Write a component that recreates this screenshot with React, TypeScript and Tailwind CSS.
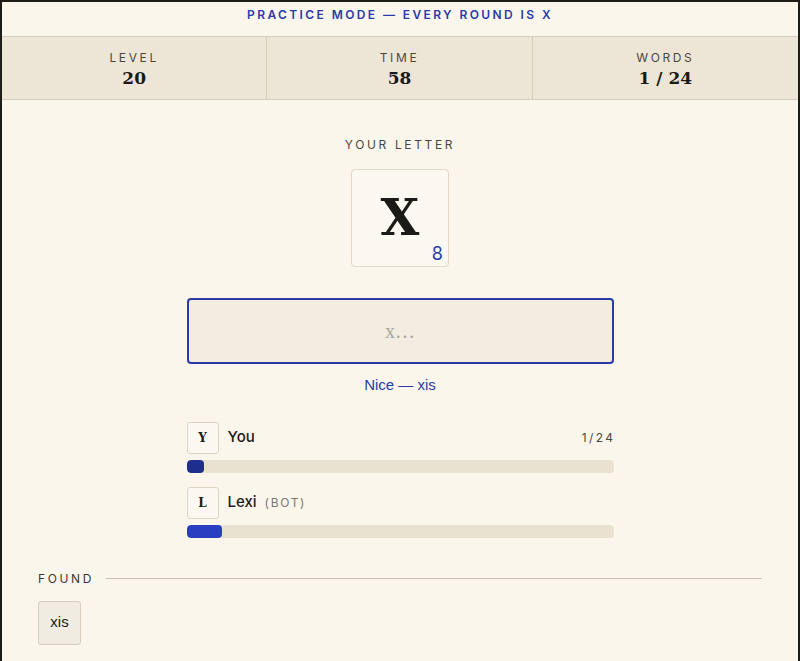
import React from 'react'

const sans = { fontFamily: 'Inter, "Liberation Sans", sans-serif' }
const slab = "[font-family:'DejaVu_Serif',serif]"

function Stat({ label, value, last }: { label: string; value: string; last?: boolean }) {
	return (
		<div className={`flex flex-col items-center justify-center h-full pt-[3px] ${last ? '' : 'border-r border-[#d6ccb8]'}`}>
			<span className="text-[12px] tracking-[0.22em] text-[#4a463e] leading-none">{label}</span>
			<span className={`mt-[6px] text-[17px] font-bold text-[#1c1a16] leading-none ${slab}`}>{value}</span>
		</div>
	)
}

function Player({ initial, name, bot, score, pct, fill }: { initial: string; name: string; bot?: boolean; score?: string; pct: number; fill: string }) {
	return (
		<div className="flex flex-col">
			<div className="flex items-center">
				<div className={`w-[32px] h-[32px] rounded-[3px] border border-[#ddd5c4] bg-[#fbf8f1] flex items-center justify-center text-[12px] font-bold text-[#1c1a16] ${slab}`}>
					{initial}
				</div>
				<span className="ml-[9px] text-[15px] font-medium text-[#1c1a16]">{name}</span>
				{bot && <span className="ml-[8px] text-[12px] tracking-[0.14em] text-[#7b766c]">(BOT)</span>}
				<div className="flex-1" />
				{score && <span className="text-[12px] tracking-[0.2em] text-[#4a463e] -mr-[2px]">{score}</span>}
			</div>
			<div className="mt-[6px] h-[13px] rounded-[4px] bg-[#e9e2d1] overflow-hidden">
				<div className={`h-full rounded-[4px] ${fill}`} style={{ width: `${pct}%` }} />
			</div>
		</div>
	)
}

export default function App() {
	return (
		<div className="w-[800px] h-[661px] overflow-hidden bg-[#faf6ec]" style={sans}>
			<div className="h-[700px] border-2 border-[#1e1c17] bg-[#faf6ec] flex flex-col">
				<div className="h-[34px] flex items-center justify-center pb-[8px]">
					<span className="text-[12px] font-semibold tracking-[0.2em] text-[#2b3aa6]">PRACTICE MODE — EVERY ROUND IS X</span>
				</div>
				<div className="h-[64px] grid grid-cols-3 bg-[#ede6d7] border-y border-[#d6ccb8]">
					<Stat label="LEVEL" value="20" />
					<Stat label="TIME" value="58" />
					<Stat label="WORDS" value="1 / 24" last />
				</div>
				<div className="flex flex-col items-center pt-[39px]">
					<span className="text-[12px] tracking-[0.22em] text-[#4a463e] leading-none">YOUR LETTER</span>
					<div className="relative mt-[18px] w-[98px] h-[98px] rounded-[4px] border border-[#e0d8c7] bg-[#fbf8f1] flex items-center justify-center">
						<span className={`text-[50px] font-bold text-[#1c1a16] leading-none ${slab}`}>X</span>
						<span className="absolute right-[5px] bottom-[3px] text-[18px] text-[#2b3aa6] leading-none">8</span>
					</div>
					<div className="mt-[31px] w-[427px] h-[66px] rounded-[4px] border-2 border-[#2b3aa6] bg-[#f3ede1] flex items-center justify-center">
						<span className="text-[20px] text-[#a9a59d] font-['Liberation_Serif',serif]">x…</span>
					</div>
					<span className="mt-[10px] text-[15px] text-[#2b3aa6] font-['Liberation_Sans',sans-serif]">Nice — xis</span>
					<div className="mt-[25px] w-[427px] flex flex-col gap-[14px]">
						<Player initial="Y" name="You" score="1/24" pct={4.2} fill="bg-[#1f2d8c]" />
						<Player initial="L" name="Lexi" bot pct={8.3} fill="bg-[#2a3ec2]" />
					</div>
				</div>
				<div className="px-[36px] mt-[35px]">
					<div className="flex items-center">
						<span className="text-[12px] tracking-[0.22em] text-[#3a3730] leading-none">FOUND</span>
						<div className="ml-[12px] flex-1 h-[1px] bg-[#cbc2ae]" />
					</div>
					<div className="mt-[16px] flex">
						<div className="w-[43px] h-[44px] rounded-[3px] border border-[#d6cebd] bg-[#f1ece1] flex items-center justify-center text-[15px] text-[#1c1a16] font-['Liberation_Sans',sans-serif]">
							xis
						</div>
					</div>
				</div>
			</div>
		</div>
	)
}
